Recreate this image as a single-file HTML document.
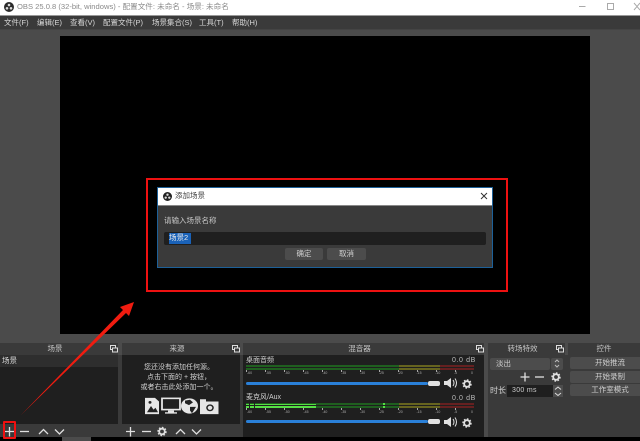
<!DOCTYPE html>
<html><head><meta charset="utf-8">
<style>
html,body{margin:0;padding:0;background:#4c4c4c}
#r{position:relative;width:640px;height:441px;overflow:hidden;background:#4b4b4b;font-family:"Liberation Sans","Noto Sans CJK SC",sans-serif;color:#d0d0d0;font-size:7.5px}
#r div{position:absolute;box-sizing:border-box}
.t{white-space:nowrap;line-height:12px}
.bar{background:#3a3a3a;height:12px;top:343px;color:#c4c4c4}
.btn{background:#4c4c4c;border-radius:2px;text-align:center;line-height:12px;height:12px;white-space:nowrap;color:#d0d0d0}
.sc{font-size:3.5px;color:#aaa;word-spacing:12.8px}
svg{position:absolute;overflow:visible}
</style></head><body><div id="r">
<!-- title bar -->
<div style="left:0;top:0;width:640px;height:15px;background:#fff"></div>
<div style="left:0;top:15px;width:640px;height:1px;background:#999"></div>
<svg style="left:4px;top:2px" width="10" height="10" viewBox="0 0 10 10"><circle cx="5" cy="5" r="5" fill="#2b2b2b"/><circle cx="5" cy="3" r="1.3" fill="#ddd"/><circle cx="3" cy="6.3" r="1.3" fill="#ddd"/><circle cx="7" cy="6.3" r="1.3" fill="#ddd"/></svg>
<div class="t" style="left:17px;top:1px;color:#8a8a8a;font-size:7.6px">OBS 25.0.8 (32-bit, windows) - 配置文件: 未命名 - 场景: 未命名</div>
<svg style="left:578px;top:2px" width="62" height="12" viewBox="0 0 62 12" fill="none" stroke="#aaa"><path d="M1 4.5H7.5"/><rect x="29.5" y="1.5" width="6" height="6"/><path d="M56 1L62 8M62 1L56 8"/></svg>
<!-- menu -->
<div style="left:0;top:16px;width:640px;height:13px;background:#3a3a3a"></div>
<div class="t" style="left:4px;top:17px;color:#d8d8d8">文件(F)</div>
<div class="t" style="left:37px;top:17px;color:#d8d8d8">编辑(E)</div>
<div class="t" style="left:70px;top:17px;color:#d8d8d8">查看(V)</div>
<div class="t" style="left:103px;top:17px;color:#d8d8d8">配置文件(P)</div>
<div class="t" style="left:152px;top:17px;color:#d8d8d8">场景集合(S)</div>
<div class="t" style="left:199px;top:17px;color:#d8d8d8">工具(T)</div>
<div class="t" style="left:232px;top:17px;color:#d8d8d8">帮助(H)</div>
<div style="left:0;top:29px;width:640px;height:1px;background:#444"></div>
<!-- preview -->
<div style="left:60px;top:36px;width:530px;height:298px;background:#000"></div>
<!-- dialog -->
<div style="left:157px;top:187px;width:336px;height:81px;background:#3a3a3a;border:1px solid #1d6098"></div>
<div style="left:158px;top:188px;width:334px;height:18px;background:#fff"></div>
<div style="left:158px;top:205px;width:334px;height:1px;background:#888"></div>
<svg style="left:163px;top:192px" width="9" height="9" viewBox="0 0 10 10"><circle cx="5" cy="5" r="5" fill="#222"/><circle cx="5" cy="3" r="1.3" fill="#ddd"/><circle cx="3" cy="6.3" r="1.3" fill="#ddd"/><circle cx="7" cy="6.3" r="1.3" fill="#ddd"/></svg>
<div class="t" style="left:175px;top:190px;color:#444">添加场景</div>
<svg style="left:480px;top:192px" width="8" height="8" viewBox="0 0 8 8" fill="none" stroke="#333"><path d="M1 1L7 7M7 1L1 7"/></svg>
<div class="t" style="left:164px;top:215px;color:#c8c8c8">请输入场景名称</div>
<div style="left:164px;top:232px;width:322px;height:13px;background:#1f1f1f;border-radius:2px"></div>
<div style="left:169px;top:233px;width:22px;height:11px;background:#1a62b8"></div>
<div class="t" style="left:169px;top:232px;color:#e8e8e8">场景2</div>
<div class="btn" style="left:285px;top:248px;width:38px;background:#4c4c4c">确定</div>
<div class="btn" style="left:327px;top:248px;width:39px;background:#4c4c4c">取消</div>
<!-- red rect -->
<div style="left:146px;top:178px;width:362px;height:114px;border:2px solid #ee1111"></div>
<!-- dock background -->
<div style="left:0;top:355px;width:640px;height:82px;background:#3a3a3a"></div>
<!-- dock bars -->
<div class="bar" style="left:0;width:118px;text-align:center;line-height:12px"><span style="position:relative;left:-4px">场景</span></div>
<div class="bar" style="left:122px;width:118px;text-align:center;line-height:12px"><span style="position:relative;left:-4px">来源</span></div>
<div class="bar" style="left:243px;width:241px;text-align:center;line-height:12px"><span style="position:relative;left:-4px">混音器</span></div>
<div class="bar" style="left:488px;width:77px;text-align:center;line-height:12px"><span style="position:relative;left:-4px">转场特效</span></div>
<div class="bar" style="left:568px;width:72px;text-align:center;line-height:12px">控件</div>
<!-- dock small icons -->
<svg style="left:110px;top:345px" width="8" height="8" fill="none" stroke="#ddd"><rect x=".5" y=".5" width="5" height="4"/><rect x="2.5" y="3" width="5" height="4" fill="#3a3a3a"/></svg>
<svg style="left:232px;top:345px" width="8" height="8" fill="none" stroke="#ddd"><rect x=".5" y=".5" width="5" height="4"/><rect x="2.5" y="3" width="5" height="4" fill="#3a3a3a"/></svg>
<svg style="left:476px;top:345px" width="8" height="8" fill="none" stroke="#ddd"><rect x=".5" y=".5" width="5" height="4"/><rect x="2.5" y="3" width="5" height="4" fill="#3a3a3a"/></svg>
<svg style="left:556px;top:345px" width="8" height="8" fill="none" stroke="#ddd"><rect x=".5" y=".5" width="5" height="4"/><rect x="2.5" y="3" width="5" height="4" fill="#3a3a3a"/></svg>
<!-- scene panel -->
<div style="left:0;top:355px;width:118px;height:69px;background:#1f1f1f"></div>
<div style="left:0;top:355px;width:118px;height:12px;background:#2e2e2e"></div>
<div class="t" style="left:2px;top:355px;color:#d8d8d8">场景</div>
<svg style="left:0;top:425px" width="118" height="12" fill="none" stroke="#e0e0e0" stroke-width="1.3"><path d="M9.5 2V11.500M5 6.500H14"/><path d="M20 6.500H29"/><path d="M39 9L43.500 4.500L48 9"/><path d="M55 4.500L59.500 9L64 4.500"/></svg>
<!-- source panel -->
<div style="left:122px;top:355px;width:118px;height:69px;background:#1f1f1f"></div>
<div class="t" style="left:122px;top:363px;width:114px;text-align:center;line-height:10px;font-size:7px;white-space:normal">您还没有添加任何源。<br>点击下面的 + 按钮，<br>或者右击此处添加一个。</div>
<svg style="left:144px;top:397px" width="76" height="18" viewBox="0 0 76 20" preserveAspectRatio="none">
<path d="M1 1H11L15 5V19H1Z" fill="#e6e6e6"/><path d="M3 17L7 10L9.500 14L11.500 12L14 17Z" fill="#222"/><circle cx="6" cy="6" r="1.500" fill="#222"/>
<rect x="18" y="1.500" width="18" height="12.500" fill="none" stroke="#e6e6e6" stroke-width="1.800"/><path d="M24 15H30V17H33V18.500H21V17H24Z" fill="#e6e6e6"/>
<circle cx="45.500" cy="10" r="8.500" fill="#e6e6e6"/><path d="M41 4L46 3L49 6L45 9L41 7ZM46 11L52 11L48 18L46 15Z" fill="#222"/>
<path d="M56 5V2.500H62V5H74.500V19H56Z" fill="#e6e6e6"/><circle cx="66" cy="12" r="3.800" fill="#222"/><circle cx="66" cy="12" r="2.300" fill="#e6e6e6"/>
</svg>
<svg style="left:122px;top:425px" width="118" height="12" fill="none" stroke="#e0e0e0" stroke-width="1.3"><path d="M8.500 2V11.500M4 6.500H13"/><path d="M20 6.500H29"/><circle cx="40" cy="6.500" r="2.800" stroke-width="1.800"/><circle cx="40" cy="6.500" r="4" stroke-width="1.400" stroke-dasharray="1.600 1.500"/><path d="M54 9L58.500 4.500L63 9"/><path d="M70 4.500L74.500 9L79 4.500"/></svg>
<!-- mixer -->
<div style="left:243px;top:355px;width:241px;height:82px;background:#1f1f1f"></div>
<div class="t" style="left:246px;top:355px;font-size:7px">桌面音频</div>
<div class="t" style="left:452px;top:355px;font-size:7px;letter-spacing:.6px;color:#bbb">0.0 dB</div>
<div style="left:246px;top:365px;width:153px;height:5px;background:#1f5f1f"></div>
<div style="left:399px;top:365px;width:41px;height:5px;background:#66641f"></div>
<div style="left:440px;top:365px;width:34px;height:5px;background:#652020"></div>
<div style="left:246px;top:367px;width:228px;height:1px;background:#1f1f1f"></div>
<div style="left:246px;top:370px;width:228px;height:2px;background:repeating-linear-gradient(90deg,#aaa 0 1px,#1f1f1f 1px 19px)"></div>
<div class="t sc" style="left:247px;top:367px">-60 -55 -50 -45 -40 -35 -30 -25 -20 -15 -10 -5 0</div>
<div style="left:246px;top:382px;width:182px;height:3px;background:#2a80d8;border-radius:2px"></div>
<div style="left:428px;top:381px;width:12px;height:5px;background:#e0e0e0;border-radius:2px"></div>
<svg style="left:443px;top:377px" width="14" height="12" fill="none" stroke="#e0e0e0"><path d="M1 4H4L8 1V11L4 8H1Z" fill="#e0e0e0" stroke="none"/><path d="M10 3Q12 6 10 9M12 1.500Q15 6 12 10.500"/></svg>
<svg style="left:462px;top:379px" width="10" height="10" fill="none" stroke="#e0e0e0"><circle cx="5" cy="5" r="2.800" stroke-width="1.800"/><circle cx="5" cy="5" r="4" stroke-width="1.400" stroke-dasharray="1.600 1.500"/></svg>

<div class="t" style="left:246px;top:392px;font-size:7px">麦克风/Aux</div>
<div class="t" style="left:452px;top:393px;font-size:7px;letter-spacing:.6px;color:#bbb">0.0 dB</div>
<div style="left:246px;top:403px;width:153px;height:5px;background:#1f5f1f"></div>
<div style="left:399px;top:403px;width:41px;height:5px;background:#66641f"></div>
<div style="left:440px;top:403px;width:34px;height:5px;background:#652020"></div>
<div style="left:246px;top:404px;width:70px;height:4px;background:#55e044"></div>
<div style="left:249px;top:403px;width:1px;height:5px;background:#1f1f1f"></div>
<div style="left:254px;top:403px;width:1px;height:5px;background:#1f1f1f"></div>
<div style="left:383px;top:403px;width:2px;height:5px;background:#55e044"></div>
<div style="left:246px;top:405px;width:228px;height:1px;background:#1f1f1f"></div>
<div style="left:246px;top:408px;width:228px;height:2px;background:repeating-linear-gradient(90deg,#aaa 0 1px,#1f1f1f 1px 19px)"></div>
<div class="t sc" style="left:247px;top:406px">-60 -55 -50 -45 -40 -35 -30 -25 -20 -15 -10 -5 0</div>
<div style="left:246px;top:420px;width:182px;height:3px;background:#2a80d8;border-radius:2px"></div>
<div style="left:428px;top:419px;width:12px;height:5px;background:#e0e0e0;border-radius:2px"></div>
<svg style="left:443px;top:416px" width="14" height="12" fill="none" stroke="#e0e0e0"><path d="M1 4H4L8 1V11L4 8H1Z" fill="#e0e0e0" stroke="none"/><path d="M10 3Q12 6 10 9M12 1.500Q15 6 12 10.500"/></svg>
<svg style="left:462px;top:418px" width="10" height="10" fill="none" stroke="#e0e0e0"><circle cx="5" cy="5" r="2.800" stroke-width="1.800"/><circle cx="5" cy="5" r="4" stroke-width="1.400" stroke-dasharray="1.600 1.500"/></svg>
<!-- transitions -->
<div style="left:484px;top:355px;width:4px;height:82px;background:#4b4b4b"></div>
<div class="btn" style="left:490px;top:358px;width:60px;text-align:left;padding-left:6px">淡出</div>
<div class="btn" style="left:551px;top:358px;width:12px"></div>
<svg style="left:554px;top:359px" width="6" height="9" fill="none" stroke="#bbb"><path d="M1 3L3 1L5 3M1 6L3 8L5 6"/></svg>
<svg style="left:519px;top:371px" width="45" height="12" fill="none" stroke="#e0e0e0" stroke-width="1.300"><path d="M6 1.500V10.500M1.500 6H10.500"/><path d="M16 6H25"/><circle cx="37" cy="6" r="2.800" stroke-width="1.800"/><circle cx="37" cy="6" r="4" stroke-width="1.400" stroke-dasharray="1.600 1.500"/></svg>
<div class="t" style="left:490px;top:385px;font-size:8px">时长</div>
<div style="left:507px;top:385px;width:46px;height:12px;background:#1f1f1f"></div>
<div class="t" style="left:512px;top:385px;font-size:7px;color:#ccc;letter-spacing:.3px">300 ms</div>
<div style="left:553px;top:385px;width:10px;height:12px;background:#4c4c4c"></div>
<svg style="left:554px;top:386px" width="8" height="11" fill="none" stroke="#ddd"><path d="M1 3.500L4 1L7 3.500M1 7L4 9.500L7 7"/></svg>
<!-- controls -->
<div class="btn" style="left:570px;top:357px;width:80px">开始推流</div>
<div class="btn" style="left:570px;top:371px;width:80px">开始录制</div>
<div class="btn" style="left:570px;top:384px;width:80px">工作室模式</div>
<!-- bottom -->
<div style="left:0;top:437px;width:640px;height:4px;background:#000"></div>
<div style="left:62px;top:437px;width:29px;height:4px;background:#4b4b4b"></div>
<!-- scene + highlight -->
<div style="left:3px;top:421px;width:13px;height:18px;border:2px solid #f01010;border-radius:1px"></div>
<!-- arrow -->
<svg style="left:0;top:0" width="640" height="441"><path d="M21 415L123 310L120 307L134 302L129 316L126 313Z" fill="#f01c10"/></svg>
</div></body></html>
